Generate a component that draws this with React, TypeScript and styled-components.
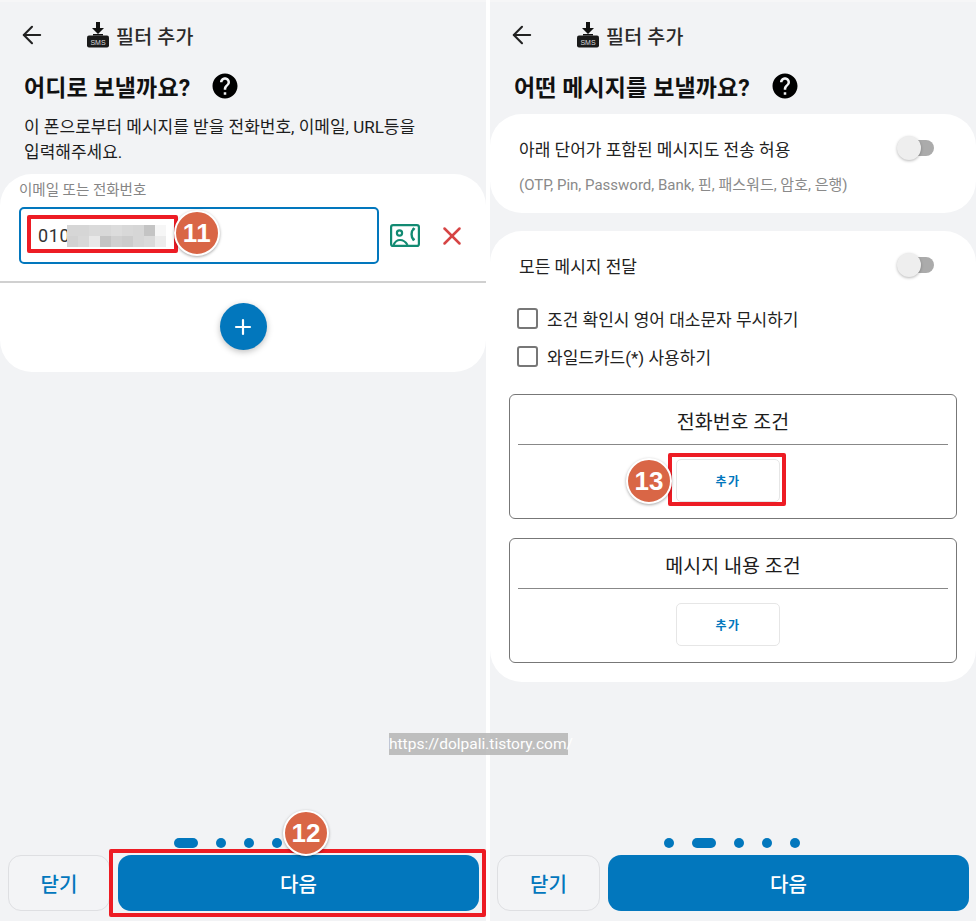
import React from "react";
import styled, { createGlobalStyle } from "styled-components";
import { ArrowLeft, Plus, X } from "lucide-react";
import { MdHelp } from "react-icons/md";

const BLUE = "#0277bd";
const RED = "#ed1c24";

const GlobalStyle = createGlobalStyle`
    html, body {
        margin: 0;
        padding: 0;
        background: #ffffff;
    }
    * {
        box-sizing: border-box;
    }
    body {
        font-family: Roboto, "Noto Sans CJK KR", sans-serif;
        color: #1c1c1e;
    }
`;

const Page = styled.div`
    position: relative;
    width: 978px;
    height: 921px;
    overflow: hidden;
    display: grid;
    grid-template-columns: 486px 486px;
    column-gap: 4px;
    background: #ffffff;
`;

const Screen = styled.section`
    position: relative;
    display: flex;
    flex-direction: column;
    height: 921px;
    background: #f2f3f5;
    border-top: 2px solid #f6f6f7;
`;

const Header = styled.header`
    display: flex;
    align-items: center;
    height: 44px;
    margin-top: 11px;
    padding-left: 18px;
`;

const BackButton = styled.span`
    display: flex;
    flex: 0 0 69px;
    color: #222;
`;

const HeaderTitle = styled.span`
    margin-left: 7px;
    font-size: 19.5px;
    font-weight: 500;
    letter-spacing: 0.2px;
    color: #2a2a2a;
`;

const Heading = styled.div`
    display: flex;
    align-items: center;
    gap: 20px;
    height: 32px;
    margin-top: 13px;
    padding-left: 24px;
`;

const HeadingText = styled.h1`
    margin: 0;
    font-size: 23px;
    font-weight: 700;
    letter-spacing: 0.1px;
    color: #111;
`;

const Description = styled.p`
    margin: 13px 0 9px;
    padding: 0 24px;
    font-size: 17px;
    line-height: 25px;
    color: #1d1d1d;
`;

const Card = styled.div<{ $height: number; $gap?: number }>`
    height: ${({ $height }) => $height}px;
    margin-top: ${({ $gap }) => $gap ?? 0}px;
    background: #ffffff;
    border-radius: 32px;
`;

const FieldLabel = styled.div`
    padding: 8px 0 0 19px;
    font-size: 14.5px;
    line-height: 18px;
    color: #858585;
`;

const FieldRow = styled.div`
    display: flex;
    align-items: center;
    margin-top: 7px;
    padding-left: 19px;
`;

const Field = styled.div`
    position: relative;
    display: flex;
    align-items: center;
    width: 360px;
    height: 57px;
    padding: 0 0 0 17px;
    border: 2px solid ${BLUE};
    border-radius: 5px;
    font-size: 18px;
    letter-spacing: 0.6px;
    color: #333;
`;

const Pixelated = styled.div`
    display: grid;
    grid-template-columns: repeat(9, 11px);
    grid-auto-rows: 11px;
    margin-left: -3px;
`;

const PixelBlock = styled.i<{ $shade: string }>`
    background: ${({ $shade }) => $shade};
`;

const FieldActions = styled.div`
    display: flex;
    align-items: center;
    margin-left: 11px;
`;

const CloseIcon = styled(X)`
    margin-left: 17px;
    color: #d64545;
`;

const FullDivider = styled.hr`
    height: 2px;
    margin: 17px 0 0;
    border: 0;
    background: #d0d0d0;
`;

const Fab = styled.button`
    display: flex;
    align-items: center;
    justify-content: center;
    width: 47px;
    height: 47px;
    margin: 20px auto 0;
    padding: 0;
    border: 0;
    border-radius: 50%;
    background: ${BLUE};
    color: #ffffff;
    box-shadow: 0 2px 6px rgba(0, 0, 0, 0.25);
`;

const SwitchRow = styled.div<{ $top: number }>`
    display: flex;
    align-items: center;
    justify-content: space-between;
    height: 24px;
    padding: ${({ $top }) => $top}px 42px 0 29px;
    box-sizing: content-box;
    font-size: 17px;
    color: #222;
`;

const Track = styled.span`
    position: relative;
    display: block;
    width: 27px;
    height: 16px;
    border-radius: 8px;
    background: #ababab;
`;

const Thumb = styled.span`
    position: absolute;
    left: -10px;
    top: -4px;
    width: 24px;
    height: 24px;
    border-radius: 50%;
    background: #eeeeee;
    box-shadow: 0 1px 3px rgba(0, 0, 0, 0.28);
`;

const SubText = styled.div`
    margin-top: 15px;
    padding-left: 29px;
    font-size: 15px;
    line-height: 20px;
    color: #8a8a8a;
`;

const CheckList = styled.div`
    display: flex;
    flex-direction: column;
    gap: 17px;
    margin-top: 31px;
    padding-left: 27px;
`;

const CheckRow = styled.label`
    display: flex;
    align-items: center;
    gap: 9px;
    height: 21px;
    font-size: 17px;
    color: #222;
`;

const CheckBox = styled.span`
    width: 21px;
    height: 21px;
    border: 2px solid #777;
    border-radius: 3px;
`;

const ConditionBox = styled.div<{ $top: number }>`
    width: 448px;
    height: 125px;
    margin: ${({ $top }) => $top}px 0 0 19px;
    padding: 0 8px;
    border: 1.5px solid #777;
    border-radius: 6px;
`;

const ConditionTitle = styled.div`
    height: 50px;
    border-bottom: 1.5px solid #888;
    text-align: center;
    font-size: 19.5px;
    line-height: 56px;
    color: #1c1c1c;
`;

const AddWrap = styled.div`
    position: relative;
    width: 104px;
    height: 43px;
    margin: 14px 0 0 158px;
`;

const AddButton = styled.button`
    width: 100%;
    height: 100%;
    padding: 0;
    border: 1.5px solid #e6e6e6;
    border-radius: 5px;
    background: #ffffff;
    font: 700 12px Roboto, "Noto Sans CJK KR", sans-serif;
    letter-spacing: 1.5px;
    color: ${BLUE};
`;

const Dots = styled.div<{ $left: number }>`
    display: flex;
    align-items: center;
    gap: 18px;
    height: 10px;
    margin-top: auto;
    padding-left: ${({ $left }) => $left}px;
`;

const Dot = styled.span<{ $active?: boolean }>`
    width: ${({ $active }) => ($active ? 24 : 10)}px;
    height: 10px;
    border-radius: 5px;
    background: ${BLUE};
`;

const Footer = styled.div<{ $left: number }>`
    position: relative;
    display: flex;
    gap: 8px;
    height: 56px;
    margin: 7px 0 10px;
    padding: 0 7px 0 ${({ $left }) => $left}px;
`;

const CloseButton = styled.button<{ $width: number }>`
    flex: 0 0 ${({ $width }) => $width}px;
    border: 1.5px solid #dedfe2;
    border-radius: 13px;
    background: #f3f4f6;
    font: 500 20px Roboto, "Noto Sans CJK KR", sans-serif;
    color: ${BLUE};
`;

const NextButton = styled.button`
    flex: 1;
    border: 0;
    border-radius: 13px;
    background: ${BLUE};
    font: 500 20px Roboto, "Noto Sans CJK KR", sans-serif;
    color: #ffffff;
`;

const RedFrame = styled.div<{ $inset: string }>`
    position: absolute;
    inset: ${({ $inset }) => $inset};
    border: 4px solid ${RED};
    border-radius: 2px;
    pointer-events: none;
`;

const Badge = styled.div<{ $x: number; $y: number }>`
    position: absolute;
    left: ${({ $x }) => $x - 23}px;
    top: ${({ $y }) => $y - 23}px;
    display: flex;
    align-items: center;
    justify-content: center;
    width: 46px;
    height: 46px;
    border: 2px solid #ffffff;
    border-radius: 50%;
    background: #d96646;
    box-shadow: 0 1px 3px rgba(0, 0, 0, 0.35);
    font: 700 26px "Liberation Sans", Arial, sans-serif;
    color: #ffffff;
`;

const Watermark = styled.div`
    position: absolute;
    left: 389px;
    top: 733px;
    width: 179px;
    height: 22px;
    background: rgba(176, 176, 176, 0.8);
    font: 400 15.5px/22px Roboto, sans-serif;
    white-space: nowrap;
    color: #ffffff;
`;

const SHADES = [
    "#d6d6d6", "#d6d6d6", "#dadada", "#d8d8d8", "#dcdcdc", "#d8d8d8", "#d6d6d6", "#c4c4c4", "#f6f6f6",
    "#d2d2d2", "#d8d8d8", "#e8e8e8", "#c4c4c4", "#d0d0d0", "#cccccc", "#d6d6d6", "#dadada", "#ececec",
];

const SmsIcon = () => (
    <svg width="22" height="26" viewBox="0 0 22 26">
        <path d="M9 0h4v6h4l-6 6-6-6h4z" fill="#111" />
        <rect x="6" y="12" width="10" height="1.5" fill="#111" />
        <rect x="0" y="13.5" width="22" height="12" rx="2" fill="#1a1a1a" />
        <text x="11" y="22.5" textAnchor="middle" fontFamily="Liberation Sans, sans-serif" fontSize="7" fill="#ddd">
            SMS
        </text>
    </svg>
);

const ContactIcon = () => (
    <svg width="30" height="23" viewBox="0 0 30 23" fill="none" stroke="#128a72" strokeWidth="2.2">
        <rect x="1.1" y="1.1" width="27.8" height="20.8" rx="2" />
        <circle cx="9.5" cy="9" r="2.6" />
        <path d="M3.5 21c1.6-3.6 3.8-5 6.5-5s5.4 1.4 7.5 5" />
        <path d="M23.5 5c-2.6 2.6-2.6 7.6 0 10.4" strokeWidth="2.4" />
        <path d="M22.6 4.2l2.2 1.4M22.4 16.2l2.2-1.4" strokeWidth="2.2" />
    </svg>
);

const TopBar = () => (
    <Header>
        <BackButton>
            <ArrowLeft size={28} strokeWidth={1.8} />
        </BackButton>
        <SmsIcon />
        <HeaderTitle>필터 추가</HeaderTitle>
    </Header>
);

const Title = ({ children }: { children: React.ReactNode }) => (
    <Heading>
        <HeadingText>{children}</HeadingText>
        <MdHelp size={30} color="#000" />
    </Heading>
);

const Toggle = () => (
    <Track>
        <Thumb />
    </Track>
);

export default function App() {
    return (
        <Page>
            <GlobalStyle />
            <Screen>
                <TopBar />
                <Title>어디로 보낼까요?</Title>
                <Description>
                    이 폰으로부터 메시지를 받을 전화번호, 이메일, URL등을
                    <br />
                    입력해주세요.
                </Description>
                <Card $height={198}>
                    <FieldLabel>이메일 또는 전화번호</FieldLabel>
                    <FieldRow>
                        <Field>
                            010
                            <Pixelated>
                                {SHADES.map((shade, idx) => (
                                    <PixelBlock $shade={shade} key={idx} />
                                ))}
                            </Pixelated>
                            <RedFrame $inset="6px 199px 9px 6px" />
                            <Badge $x={176} $y={24}>
                                11
                            </Badge>
                        </Field>
                        <FieldActions>
                            <ContactIcon />
                            <CloseIcon size={30} strokeWidth={2} />
                        </FieldActions>
                    </FieldRow>
                    <FullDivider />
                    <Fab>
                        <Plus size={24} strokeWidth={2.2} />
                    </Fab>
                </Card>
                <Dots $left={174}>
                    <Dot $active />
                    <Dot />
                    <Dot />
                    <Dot />
                </Dots>
                <Footer $left={8}>
                    <CloseButton $width={102}>닫기</CloseButton>
                    <NextButton>다음</NextButton>
                    <RedFrame $inset="-6px 0 -6px 109px" />
                    <Badge $x={306} $y={-22}>
                        12
                    </Badge>
                </Footer>
            </Screen>
            <Screen>
                <TopBar />
                <Title>어떤 메시지를 보낼까요?</Title>
                <Card $height={99} $gap={12}>
                    <SwitchRow $top={22}>
                        아래 단어가 포함된 메시지도 전송 허용
                        <Toggle />
                    </SwitchRow>
                    <SubText>(OTP, Pin, Password, Bank, 핀, 패스워드, 암호, 은행)</SubText>
                </Card>
                <Card $height={451} $gap={18}>
                    <SwitchRow $top={22}>
                        모든 메시지 전달
                        <Toggle />
                    </SwitchRow>
                    <CheckList>
                        <CheckRow>
                            <CheckBox />
                            조건 확인시 영어 대소문자 무시하기
                        </CheckRow>
                        <CheckRow>
                            <CheckBox />
                            와일드카드(*) 사용하기
                        </CheckRow>
                    </CheckList>
                    <ConditionBox $top={27}>
                        <ConditionTitle>전화번호 조건</ConditionTitle>
                        <AddWrap>
                            <AddButton>추가</AddButton>
                            <RedFrame $inset="-6.5px -6px -4px -8px" />
                            <Badge $x={-27} $y={22}>
                                13
                            </Badge>
                        </AddWrap>
                    </ConditionBox>
                    <ConditionBox $top={19}>
                        <ConditionTitle>메시지 내용 조건</ConditionTitle>
                        <AddWrap>
                            <AddButton>추가</AddButton>
                        </AddWrap>
                    </ConditionBox>
                </Card>
                <Dots $left={174}>
                    <Dot />
                    <Dot $active />
                    <Dot />
                    <Dot />
                    <Dot />
                </Dots>
                <Footer $left={7}>
                    <CloseButton $width={103}>닫기</CloseButton>
                    <NextButton>다음</NextButton>
                </Footer>
            </Screen>
            <Watermark>https://dolpali.tistory.com/</Watermark>
        </Page>
    );
}
